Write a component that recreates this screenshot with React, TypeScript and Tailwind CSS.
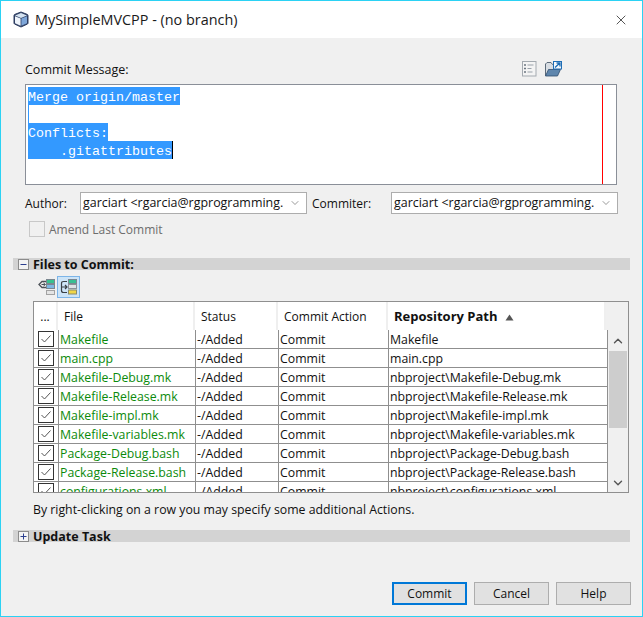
import React from "react";
import { ChevronDown, ChevronUp, X } from "lucide-react";

const rows = [
  ["Makefile", "Makefile"],
  ["main.cpp", "main.cpp"],
  ["Makefile-Debug.mk", "nbproject\\Makefile-Debug.mk"],
  ["Makefile-Release.mk", "nbproject\\Makefile-Release.mk"],
  ["Makefile-impl.mk", "nbproject\\Makefile-impl.mk"],
  ["Makefile-variables.mk", "nbproject\\Makefile-variables.mk"],
  ["Package-Debug.bash", "nbproject\\Package-Debug.bash"],
  ["Package-Release.bash", "nbproject\\Package-Release.bash"],
  ["configurations.xml", "nbproject\\configurations.xml"],
];

const CubeIcon = () => (
  <svg width="16" height="17" viewBox="0 0 16 17">
    <path d="M8 1 L14.5 3.5 Q15 3.8 15 4.5 V12 Q15 12.6 14.5 13 L8 16 L1.5 13 Q1 12.6 1 12 V4.5 Q1 3.8 1.5 3.5 Z" fill="#2f3f63" stroke="#2f3f63" strokeWidth="1" strokeLinejoin="round" />
    <path d="M2 4.4 L8 2 L14 4.4 L8 7 Z" fill="#d5e3f1" />
    <path d="M2 5.2 L7.6 7.6 V14.8 L2 12.2 Z" fill="#eef4fb" />
    <path d="M8.4 7.6 L14 5.2 V12.2 L8.4 14.8 Z" fill="#7ea6d8" />
  </svg>
);

const ListIcon = () => (
  <svg width="15" height="16" viewBox="0 0 15 16">
    <rect x="0.5" y="0.5" width="13.5" height="14.5" fill="#f4f4f4" stroke="#a4aab0" />
    <path d="M2 4h2M2 7.5h2M2 11h2" stroke="#6c7680" strokeWidth="1.6" />
    <path d="M5.5 4h6M5.5 7.5h4M5.5 11h5" stroke="#9aa2aa" strokeWidth="1" />
  </svg>
);

const FolderIcon = () => (
  <svg width="17" height="16" viewBox="0 0 17 16">
    <path d="M0.5 14.5 V3 L2 1.5 H6 L7.5 3.5 H11 V14.5 Z" fill="#d8dde3" stroke="#5d6b7a" />
    <path d="M0.5 15 L3.5 8.5 H15.5 L12.5 15 Z" fill="#5f86ad" stroke="#2e4d6d" strokeWidth="0.8" />
    <rect x="8.5" y="0.5" width="8" height="7.5" fill="#f5f9fd" stroke="#1e6db5" />
    <path d="M10 6.5 L14.5 2.2 M11.5 2 H15 V5.5" stroke="#1e6db5" strokeWidth="1.3" fill="none" />
  </svg>
);

const DiffIcon = ({ variant }: { variant: "in" | "out" }) => (
  <svg width="18" height="16" viewBox="0 0 18 16">
    {variant === "in" ? (
      <>
        <path d="M8 2.5 H4 L1 5.5 L4 8.5 H8" fill="none" stroke="#4b5157" strokeWidth="1.3" />
        <path d="M3.5 5.5 H7 M5.5 4 L7.5 5.5 L5.5 7" fill="none" stroke="#4b5157" strokeWidth="1" />
        <rect x="8.5" y="0.5" width="8" height="4" fill="#37c28f" stroke="#7b8790" />
        <rect x="8.5" y="5.5" width="8" height="4" fill="#7db8e4" stroke="#7b8790" />
        <rect x="8.5" y="11.5" width="8" height="4" fill="#e4e4e4" stroke="#a2a2a2" />
      </>
    ) : (
      <>
        <path d="M7 2.5 H3.5 Q1.5 2.5 1.5 4.5 V11.5 Q1.5 13.5 3.5 13.5 H7 M1.5 8 H7 M5 6 L7 8 L5 10" fill="none" stroke="#3b4046" strokeWidth="1.2" />
        <rect x="8.5" y="0.5" width="8" height="4" fill="#39bf92" stroke="#7b8790" />
        <rect x="8.5" y="5.5" width="8" height="4" fill="#dfe3e6" stroke="#8a9298" />
        <rect x="8.5" y="11" width="8" height="4" fill="#f0d648" stroke="#8a8a6a" />
      </>
    )}
  </svg>
);

const Select = () => (
  <div className="flex h-[22px] w-[227px] items-center justify-between overflow-hidden border border-[#adadad] bg-white pl-[2px] pr-[5px] text-[#111]">
    <span className="whitespace-nowrap pt-[1px] text-[12.45px]">garciart &lt;rgarcia@rgprogramming.</span>
    <ChevronDown size={12} strokeWidth={1.2} className="shrink-0 text-[#555]" />
  </div>
);

const SectionBar = ({ sign, title }: { sign: "minus" | "plus"; title: string }) => (
  <div className="ml-[12px] mr-[12px] flex h-[12px] items-center bg-[#d3d3d3]">
    <svg width="11" height="11" viewBox="0 0 11 11" className="ml-[5px] shrink-0">
      <rect x="0.5" y="0.5" width="10" height="10" fill="#f4f4f4" stroke="#8c8c8c" />
      <path d={sign === "minus" ? "M2.5 5.5h6" : "M2.5 5.5h6M5.5 2.5v6"} stroke="#2c3f8f" strokeWidth="1" />
    </svg>
    <span className="ml-[4px] whitespace-nowrap pt-[2px] text-[12.5px] font-bold leading-[12px] text-[#111]">{title}</span>
  </div>
);

const HeaderCell = ({ w, children, cn }: { w: string; children: React.ReactNode; cn?: string }) => (
  <div className={`flex h-full shrink-0 items-center border-r-2 border-[#efefef] bg-white pt-[2px] ${w} ${cn ?? ""}`}>{children}</div>
);

const FooterButton = ({ label, primary }: { label: string; primary?: boolean }) => (
  <button
    className={
      primary
        ? "h-[23px] w-[75px] border-2 border-[#0078d7] bg-[#e1e1e1] pt-[1px] text-[#111]"
        : "h-[23px] w-[75px] border border-[#adadad] bg-[#e1e1e1] pt-[1px] text-[#111]"
    }
  >
    {label}
  </button>
);

export default function App() {
  return (
    <div className="flex h-[617px] w-[643px] flex-col border border-[#2bd2f4] bg-[#f0f0f0] font-['Open_Sans','Noto_Sans',sans-serif] text-[12px] text-[#111]">
      {/* Title bar */}
      <div className="flex h-[37px] shrink-0 items-center bg-white pl-[12px] pr-[13px]">
        <CubeIcon />
        <span className="ml-[6px] text-[14.4px] text-[#1a1a1a]">MySimpleMVCPP - (no branch)</span>
        <X size={16} strokeWidth={1} className="ml-auto text-black" />
      </div>

      <div className="flex min-h-0 flex-1 flex-col">
        <div className="px-[24px]">
          <div className="mt-[23px] flex h-[16px] items-center">
            <span className="pt-[2px] text-[12.5px]">Commit Message:</span>
            <span className="ml-auto mr-[56px] flex items-center gap-[8px]">
              <ListIcon />
              <FolderIcon />
            </span>
          </div>

          {/* Commit message editor */}
          <div className="relative mr-[1px] mt-[7px] h-[101px] border border-[#8a8f98] bg-white pl-[2px] pt-[2px] font-['Liberation_Mono',monospace] text-[13.33px] leading-[18px] text-white">
            <div className="flex h-[18px]"><span className="bg-[#3399ff] pt-[1px] [&>i]:not-italic"><i className="relative top-[1px]">Merge origin/master</i></span></div>
            <div className="flex h-[18px]"><span className="w-[1px] bg-[#3399ff]"></span></div>
            <div className="flex h-[18px]"><span className="bg-[#3399ff] pt-[1px] [&>i]:not-italic"><i className="relative top-[1px]">Conflicts:</i></span></div>
            <div className="flex h-[18px]">
              <span className="whitespace-pre bg-[#3399ff] pt-[1px] [&>i]:not-italic"><i className="relative top-[1px]">{"    .gitattributes"}</i></span>
              <span className="w-[1px] bg-black"></span>
            </div>
            <div className="absolute bottom-0 right-[13px] top-0 w-px bg-[#ff0000]"></div>
          </div>

          <div className="mt-[7px] flex h-[22px] items-center">
            <span className="w-[55px] pt-[2px]">Author:</span>
            <Select />
            <span className="ml-[5px] w-[79px] pt-[2px]">Commiter:</span>
            <Select />
          </div>

          <div className="ml-[4px] mt-[7px] flex h-[16px] items-center">
            <span className="h-[16px] w-[16px] border border-[#c8c8c8] bg-[#f0f0f0]"></span>
            <span className="ml-[4px] pt-[2px] text-[#6d6d6d]">Amend Last Commit</span>
          </div>
        </div>

        <div className="mt-[21px]">
          <SectionBar sign="minus" title="Files to Commit:" />
        </div>

        {/* Diff toolbar */}
        <div className="ml-[35px] mt-[6px] flex h-[22px] items-center">
          <span className="flex w-[21px] justify-center"><DiffIcon variant="in" /></span>
          <span className="flex h-[22px] w-[23px] items-center justify-center border border-[#7db5e8] bg-[#cde4f7]">
            <DiffIcon variant="out" />
          </span>
        </div>

        {/* Files table */}
        <div className="ml-[32px] mr-[13px] mt-[3px] flex h-[192px] flex-col overflow-hidden border border-[#8f8f8f] bg-[#f0f0f0]">
          <div className="flex h-[28px] shrink-0 pr-[22px]">
            <HeaderCell w="w-[24px]" cn="justify-center">...</HeaderCell>
            <HeaderCell w="w-[137px]" cn="pl-[6px]">File</HeaderCell>
            <HeaderCell w="w-[83px]" cn="pl-[6px]">Status</HeaderCell>
            <HeaderCell w="w-[110px]" cn="pl-[6px]">Commit Action</HeaderCell>
            <HeaderCell w="flex-1" cn="pl-[6px] text-[13px] font-bold">
              Repository Path
              <svg width="9" height="7" viewBox="0 0 9 7" className="ml-[7px]"><path d="M4.5 0.5 L8.5 6.5 H0.5 Z" fill="#555" /></svg>
            </HeaderCell>
          </div>
          <div className="flex min-h-0 flex-1">
            <div className="w-[574px] shrink-0 overflow-hidden border-r border-[#8f8f8f] bg-white text-[12.3px]">
              {rows.map(([file, path]) => (
                <div key={path} className="flex h-[19px] border-b border-[#8f8f8f] leading-[20px]">
                  <div className="flex w-[25px] shrink-0 items-center justify-center border-r border-[#8f8f8f]">
                    <svg width="16" height="16" viewBox="0 0 16 16">
                      <rect x="0.5" y="0.5" width="15" height="15" fill="#fff" stroke="#333" />
                      <path d="M3.5 8 L6.5 11 L12.5 4.5" fill="none" stroke="#555" strokeWidth="1" />
                    </svg>
                  </div>
                  <div className="w-[137px] shrink-0 overflow-hidden whitespace-nowrap border-r border-[#8f8f8f] pl-[1px] text-[#0b8a0b]">{file}</div>
                  <div className="w-[83px] shrink-0 border-r border-[#8f8f8f] pl-[1px]">-/Added</div>
                  <div className="w-[110px] shrink-0 border-r border-[#8f8f8f] pl-[1px]">Commit</div>
                  <div className="flex-1 overflow-hidden whitespace-nowrap pl-[1px]">{path}</div>
                </div>
              ))}
            </div>
            {/* Scrollbar */}
            <div className="flex flex-1 flex-col items-center bg-[#f0f0f0] px-[1px]">
              <div className="flex h-[21px] shrink-0 items-center justify-center">
                <ChevronUp size={14} strokeWidth={2.4} className="text-[#555]" />
              </div>
              <div className="h-[77px] w-full bg-[#cdcdcd]"></div>
              <div className="mt-auto flex h-[18px] shrink-0 items-center justify-center">
                <ChevronDown size={14} strokeWidth={2.4} className="text-[#555]" />
              </div>
            </div>
          </div>
        </div>

        <div className="ml-[32px] mt-[9px] h-[16px] text-[12.3px] leading-[16px]">By right-clicking on a row you may specify some additional Actions.</div>

        <div className="mt-[12px]">
          <SectionBar sign="plus" title="Update Task" />
        </div>

        <div className="mr-[11px] mt-[40px] flex justify-end gap-[7px]">
          <FooterButton label="Commit" primary />
          <FooterButton label="Cancel" />
          <FooterButton label="Help" />
        </div>
      </div>
    </div>
  );
}
